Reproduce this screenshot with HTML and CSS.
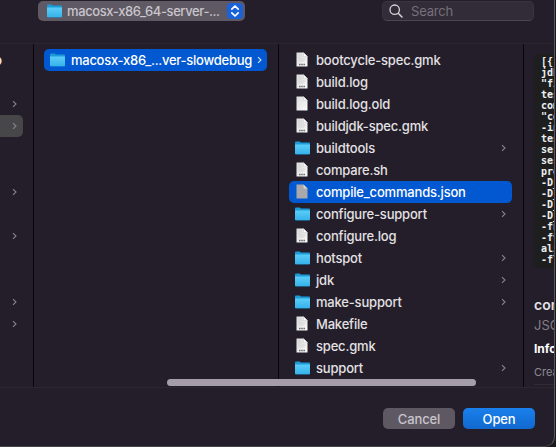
FILE: index.html
```html
<!DOCTYPE html>
<html lang="en">
<head>
<meta charset="utf-8">
<title>Open</title>
<link rel="stylesheet" href="styles.css">
</head>
<body>
<svg class="defs" aria-hidden="true">
  <defs>
    <linearGradient id="fg" x1="0" y1="0" x2="0" y2="1"><stop offset="0" stop-color="#5bcdf8"/><stop offset="1" stop-color="#37b2ea"/></linearGradient>
    <linearGradient id="pg" x1="0" y1="0" x2="1" y2="1"><stop offset="0" stop-color="#dcdcdc"/><stop offset="1" stop-color="#fafafa"/></linearGradient>
    <symbol id="folder" viewBox="0 0 15 14">
      <path d="M0 1.6Q0 .5 1 .5H4.6L6 1.6H14Q15 1.6 15 2.6V12.6Q15 13.5 14 13.5H1Q0 13.5 0 12.6Z" fill="#1b9cd8"/>
      <path d="M0 3.6H15V12.2Q15 13.1 14 13.1H1Q0 13.1 0 12.2Z" fill="url(#fg)"/>
    </symbol>
    <symbol id="page" viewBox="0 0 12 15">
      <path d="M.5.5H7.5L11.5 4.5V14.5H.5Z" fill="url(#pg)"/>
      <path d="M7.5.5V4.5H11.5Z" fill="#fff" stroke="#b9b9b9" stroke-width=".4"/>
    </symbol>
    <symbol id="doc" viewBox="0 0 12 15">
      <use href="#page"/>
      <path d="M2 3H6M2 5H6.5M2 7H9.5M2 9H8.5" stroke="#c8c8c8" stroke-width=".6"/>
      <path d="M3 12.5H9.2" stroke="#707070" stroke-width="1.3" stroke-dasharray="1.2 .4"/>
    </symbol>
    <symbol id="dim" viewBox="0 0 12 15">
      <path d="M.5.5H7.5L11.5 4.5V14.5H.5Z" fill="#a9a9ab"/>
      <path d="M7.5.5V4.5H11.5Z" fill="#d5d5d5"/>
    </symbol>
    <symbol id="chev" viewBox="0 0 5 7">
      <path d="M1 .7L4 3.5L1 6.3" fill="none" stroke="currentColor" stroke-width="1.1"/>
    </symbol>
  </defs>
</svg>
<div class="window">
  <header class="toolbar">
    <div class="popup">
      <svg class="folder"><use href="#folder"/></svg>
      <span class="popup-label">macosx-x86_64-server-...</span>
      <span class="stepper"><svg viewBox="0 0 16 16"><path d="M4.8 6.2L8 3L11.2 6.2M4.8 9.8L8 13L11.2 9.8" fill="none" stroke="#fff" stroke-width="1.7" stroke-linecap="round" stroke-linejoin="round"/></svg></span>
    </div>
    <div class="search">
      <svg viewBox="0 0 14 14"><path d="M9.5 9.5L13 13" stroke="#d6d3d8" stroke-width="1.5" stroke-linecap="round"/><circle cx="5.7" cy="5.7" r="4.7" fill="none" stroke="#d6d3d8" stroke-width="1.3"/></svg>
      <span>Search</span>
    </div>
  </header>
  <main class="browser">
    <div class="col parents">
      <div class="row cut"><b>o</b></div>
      <div class="row"></div>
      <div class="row"><svg class="chev"><use href="#chev"/></svg></div>
      <div class="row current"><svg class="chev"><use href="#chev"/></svg></div>
      <div class="row"></div>
      <div class="row"></div>
      <div class="row"><svg class="chev"><use href="#chev"/></svg></div>
      <div class="row"></div>
      <div class="row"><svg class="chev"><use href="#chev"/></svg></div>
      <div class="row"></div>
      <div class="row"></div>
      <div class="row"><svg class="chev"><use href="#chev"/></svg></div>
      <div class="row"><svg class="chev"><use href="#chev"/></svg></div>
    </div>
    <div class="col folders">
      <div class="row selected"><svg class="folder"><use href="#folder"/></svg><span>macosx-x86_...ver-slowdebug</span><svg class="chev"><use href="#chev"/></svg></div>
    </div>
    <div class="col files">
      <div class="row"><svg class="file"><use href="#doc"/></svg><span>bootcycle-spec.gmk</span></div>
      <div class="row"><svg class="file"><use href="#doc"/></svg><span>build.log</span></div>
      <div class="row"><svg class="file"><use href="#page"/></svg><span>build.log.old</span></div>
      <div class="row"><svg class="file"><use href="#doc"/></svg><span>buildjdk-spec.gmk</span></div>
      <div class="row"><svg class="folder"><use href="#folder"/></svg><span>buildtools</span><svg class="chev"><use href="#chev"/></svg></div>
      <div class="row"><svg class="file"><use href="#doc"/></svg><span>compare.sh</span></div>
      <div class="row selected"><svg class="file"><use href="#dim"/></svg><span>compile_commands.json</span></div>
      <div class="row"><svg class="folder"><use href="#folder"/></svg><span>configure-support</span><svg class="chev"><use href="#chev"/></svg></div>
      <div class="row"><svg class="file"><use href="#doc"/></svg><span>configure.log</span></div>
      <div class="row"><svg class="folder"><use href="#folder"/></svg><span>hotspot</span><svg class="chev"><use href="#chev"/></svg></div>
      <div class="row"><svg class="folder"><use href="#folder"/></svg><span>jdk</span><svg class="chev"><use href="#chev"/></svg></div>
      <div class="row"><svg class="folder"><use href="#folder"/></svg><span>make-support</span><svg class="chev"><use href="#chev"/></svg></div>
      <div class="row"><svg class="file"><use href="#doc"/></svg><span>Makefile</span></div>
      <div class="row"><svg class="file"><use href="#doc"/></svg><span>spec.gmk</span></div>
      <div class="row"><svg class="folder"><use href="#folder"/></svg><span>support</span><svg class="chev"><use href="#chev"/></svg></div>
    </div>
    <div class="preview">
<pre class="code">[{
jdk
"fi
tes
com
"co
-in
tes
ser
ser
pro
-D_
-D_
-D_
-D_
-fn
-fv
ali
-fl
-</pre>
      <div class="name">com</div>
      <div class="kind">JSO</div>
      <div class="info">Info</div>
      <div class="created">Crea</div>
    </div>
    <div class="scrollbar"></div>
  </main>
  <footer class="actions">
    <button class="btn cancel">Cancel</button>
    <button class="btn open">Open</button>
  </footer>
</div>
</body>
</html>
```
FILE: styles.css
```css
* { box-sizing: border-box; }
body {
  margin: 0;
  background: #19191a;
  font: 500 13px/22px Inter, "Liberation Sans", sans-serif;
  color: #e3e1e5;
  overflow: hidden;
}
.defs { position: absolute; width: 0; height: 0; }
svg { display: block; flex: none; }
.window {
  width: 555px;
  height: 447px;
  display: grid;
  grid-template-rows: 43px 345px 59px;
  background: #231e29;
  border-right: 1px solid #59555d;
  border-bottom: 1px solid #47434b;
  border-bottom-right-radius: 10px;
  overflow: hidden;
}
.toolbar {
  display: flex;
  justify-content: space-between;
  align-items: flex-start;
  padding: 1px 20px 0 38px;
}
.popup {
  width: 207px;
  height: 20px;
  display: flex;
  align-items: center;
  padding: 0 2px 0 9px;
  border-radius: 5px;
  background: #5f5963;
  color: #c9c5cc;
}
.popup-label { margin-left: 5px; flex: 1; min-width: 0; white-space: nowrap; letter-spacing: -.4px; }
.stepper { width: 16px; height: 16px; border-radius: 4px; background: #1a62da; }
.stepper svg { width: 16px; height: 16px; }
.search {
  width: 152px;
  height: 20px;
  display: flex;
  align-items: center;
  gap: 8px;
  padding-left: 6px;
  border-radius: 5px;
  background: #312c37;
  border: 1px solid #39343f;
  border-bottom-color: #4b4650;
  color: #76717b;
  font-weight: 400;
  letter-spacing: -.2px;
}
.search svg { width: 14px; height: 14px; }
.browser {
  position: relative;
  display: grid;
  grid-template-columns: 34px 245px 245px 1fr;
  border-top: 1px solid #29262c;
  border-bottom: 1px solid #2a282c;
  overflow: hidden;
}
.col { border-right: 1px solid #08060a; padding-top: 5px; min-width: 0; }
.row { height: 22px; display: flex; align-items: center; white-space: nowrap; }
.row .chev { margin-left: auto; }
.chev { width: 5px; height: 8px; color: #88838c; }
.folder { width: 15px; height: 14px; }
.file { width: 12px; height: 15px; margin: 0 2px 0 1px; }
.row > svg, .row > span { margin-bottom: 1px; }
.parents .row { width: 23px; padding-right: 6px; }
.parents .current { background: #474648; border-radius: 0 5px 5px 0; }
.cut b { margin-left: -6px; font-weight: 700; padding-bottom: 1px; }
.folders .row, .files .row { margin: 0 11px 0 10px; padding: 0 5px 0 6px; border-radius: 5px; }
.folders .row span { margin-left: 6px; letter-spacing: -.27px; }
.files .row span { margin-left: 6px; letter-spacing: -.19px; }
.files .row .chev { margin-right: 1px; }
.selected { background: #0258d0; color: #fff; }
.selected .chev { color: #d5e2f7; }
.preview { padding: 10px 0 0 10px; min-width: 0; overflow: hidden; white-space: nowrap; }
.code {
  width: 60px;
  height: 214px;
  margin: 0;
  padding: 2px 0 0 7px;
  border-radius: 5px;
  background: #1d1e1d;
  color: #eee;
  font: 700 10px/11px "DejaVu Sans Mono", monospace;
  overflow: hidden;
}
.name { margin-top: 26px; font-size: 14px; font-weight: 600; }
.kind { margin-top: -2px; font-weight: 400; color: #837e87; }
.info { margin-top: 2px; font-weight: 700; font-size: 12px; color: #fff; }
.created { margin-top: 1px; padding-bottom: 1px; font-size: 11px; color: #8e8992; font-weight: 400; border-bottom: 1px solid #302c35; }
.scrollbar {
  position: absolute;
  left: 167px;
  bottom: 1px;
  width: 309px;
  height: 7px;
  border-radius: 4px;
  background: #a59eaa;
}
.actions {
  display: flex;
  justify-content: flex-end;
  align-items: flex-start;
  gap: 8px;
  padding: 20px 19px 0 0;
}
.btn {
  width: 72px;
  height: 21px;
  border: 0;
  border-radius: 5px;
  padding: 0;
  font: inherit;
  line-height: 20px;
  letter-spacing: -.15px;
}
.cancel { background: #5e5863; color: #c9c5cc; }
.open { background: linear-gradient(#1a80ec, #1168cf); color: #fff; }
```
